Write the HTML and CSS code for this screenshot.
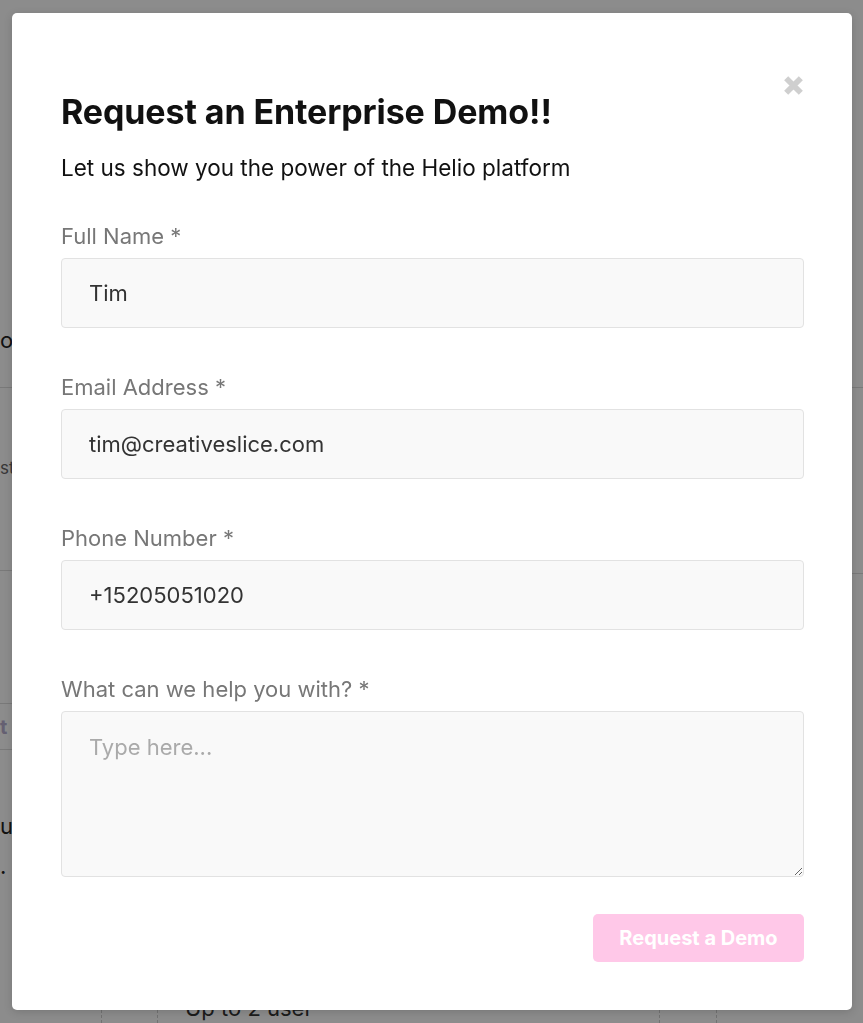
FILE: index.html
```html
<!DOCTYPE html>
<html lang="en">
<head>
<meta charset="utf-8">
<title>Request an Enterprise Demo</title>
<link rel="stylesheet" href="styles.css">
</head>
<body>
<div class="page">
  <div class="side side-left">
    <div class="frag frag-a"><span>ov</span></div>
    <div class="frag frag-b"><span>st</span></div>
    <div class="frag frag-c"><span>t</span></div>
    <div class="frag frag-d"><span>u<br>.</span></div>
  </div>
  <div class="middle"></div>
  <div class="side side-right">
    <div class="frag frag-e"><span>ti</span></div>
    <div class="frag frag-f"><span>s</span></div>
    <div class="frag frag-g"><span>t</span></div>
    <div class="frag frag-h"><span>o</span></div>
  </div>
  <div class="table-row">
    <div class="cell c1"></div>
    <div class="cell c2"></div>
    <div class="cell c3">Up to 2 user</div>
    <div class="cell c4"></div>
    <div class="cell c5"></div>
  </div>
</div>

<div class="overlay"></div>

<div class="modal" role="dialog" aria-labelledby="modal-title">
  <button class="close" type="button" aria-label="Close">
    <svg viewBox="0 0 22 22" width="22" height="22"><path d="M4 4 L18 18 M18 4 L4 18" stroke="#cfcfcf" stroke-width="5.5" stroke-linecap="butt"/></svg>
  </button>
  <h1 id="modal-title" class="title">Request an Enterprise Demo!!</h1>
  <p class="subtitle">Let us show you the power of the Helio platform</p>
  <form class="form">
    <label class="field">
      <span class="label">Full Name *</span>
      <input class="input" type="text" value="Tim">
    </label>
    <label class="field">
      <span class="label">Email Address *</span>
      <input class="input" type="email" value="tim@creativeslice.com">
    </label>
    <label class="field">
      <span class="label">Phone Number *</span>
      <input class="input" type="tel" value="+15205051020">
    </label>
    <label class="field">
      <span class="label">What can we help you with? *</span>
      <textarea class="input textarea" placeholder="Type here..."></textarea>
    </label>
    <div class="actions">
      <button class="submit" type="button">Request a Demo</button>
    </div>
  </form>
</div>
</body>
</html>
```

FILE: styles.css
```css
html, body {
  margin: 0;
  padding: 0;
}
body {
  background: #ffffff;
  font-family: Inter, "Noto Sans", sans-serif;
  color: #222;
  height: 1023px;
  overflow: hidden;
}

/* background page */
.page {
  display: grid;
  grid-template-columns: 40px 1fr 40px;
  grid-template-rows: 995px 28px;
  height: 1023px;
}
.side {
  display: flex;
  flex-direction: column;
}
.frag {
  display: flex;
  white-space: nowrap;
  font-size: 22px;
}
.side-left .frag {
  margin-left: -16px;
  margin-right: 0;
}
.side-right .frag {
  padding-left: 11px;
}
.frag-a {
  margin-top: 327px;
  height: 60px;
  border-bottom: 1px solid #dcdcdc;
  padding-left: 16px;
}
.frag-b {
  height: 183px;
  padding-top: 70px;
  padding-left: 16px;
  box-sizing: border-box;
  font-size: 17px;
  color: #666;
  border-bottom: 1px solid #dcdcdc;
}
.frag-c {
  margin-top: 132px;
  height: 45px;
  padding-left: 16px;
  border-top: 1px solid #dcdcdc;
  border-bottom: 1px solid #dcdcdc;
  align-items: center;
  font-weight: 700;
  color: #b8b0d0;
  font-size: 20px;
}
.frag-d {
  margin-top: 56px;
  padding-left: 16px;
  line-height: 40px;
}
.frag-e {
  margin-top: 327px;
  height: 60px;
  border-bottom: 1px solid #dcdcdc;
}
.frag-f {
  margin-top: 139px;
  height: 46px;
  font-weight: 700;
  font-size: 30px;
  border-bottom: 1px solid #dcdcdc;
}
.frag-g {
  margin-top: 16px;
  font-size: 36px;
  height: 60px;
}
.frag-h {
  margin-top: 60px;
  font-size: 20px;
  color: #555;
}
.table-row {
  grid-column: 1 / 4;
  display: grid;
  grid-template-columns: 102px 56px 502px 57px 1fr;
}
.cell {
  border-right: 1px dashed #cfcfcf;
  font-size: 22px;
  color: #333;
  line-height: 26px;
}
.c3 {
  padding-left: 27px;
}
.c5 { border-right: none; }

.overlay {
  position: fixed;
  inset: 0;
  background: rgba(0, 0, 0, 0.45);
}

/* modal */
.modal {
  position: absolute;
  top: 13px;
  left: 12px;
  width: 840px;
  height: 997px;
  box-sizing: border-box;
  background: #ffffff;
  border-radius: 5px;
  padding: 81px 48px 0 49px;
  box-shadow: 0 2px 8px rgba(0, 0, 0, 0.15);
}
.close {
  position: absolute;
  top: 61px;
  right: 47px;
  width: 23px;
  height: 23px;
  padding: 0;
  border: 0;
  background: none;
  cursor: pointer;
}
.close svg { display: block; width: 23px; height: 23px; }
.title {
  margin: 0;
  font-size: 34px;
  line-height: 36px;
  font-weight: 700;
  color: #111;
  letter-spacing: -0.1px;
}
.subtitle {
  margin: 24px 0 0;
  font-size: 22.5px;
  line-height: 28px;
  color: #111;
}
.form {
  margin-top: 42px;
  display: flex;
  flex-direction: column;
}
.field {
  display: flex;
  flex-direction: column;
  margin-bottom: 47px;
}
.label {
  font-size: 22px;
  line-height: 24px;
  color: #777;
  margin-bottom: 10px;
}
.input {
  height: 70px;
  box-sizing: border-box;
  border: 1px solid #e2e2e2;
  border-radius: 4px;
  background: #f9f9f9;
  padding: 0 27px;
  font-family: inherit;
  font-size: 22px;
  color: #333;
  outline: none;
}
.textarea {
  height: 166px;
  padding-top: 22px;
  resize: vertical;
}
.textarea::placeholder {
  color: #aaa;
}
.actions {
  display: flex;
  justify-content: flex-end;
  margin-top: -10px;
}
.submit {
  width: 211px;
  height: 48px;
  border: 0;
  border-radius: 5px;
  background: #ffc8e8;
  color: #ffffff;
  font-family: inherit;
  font-size: 20px;
  font-weight: 700;
}
```
